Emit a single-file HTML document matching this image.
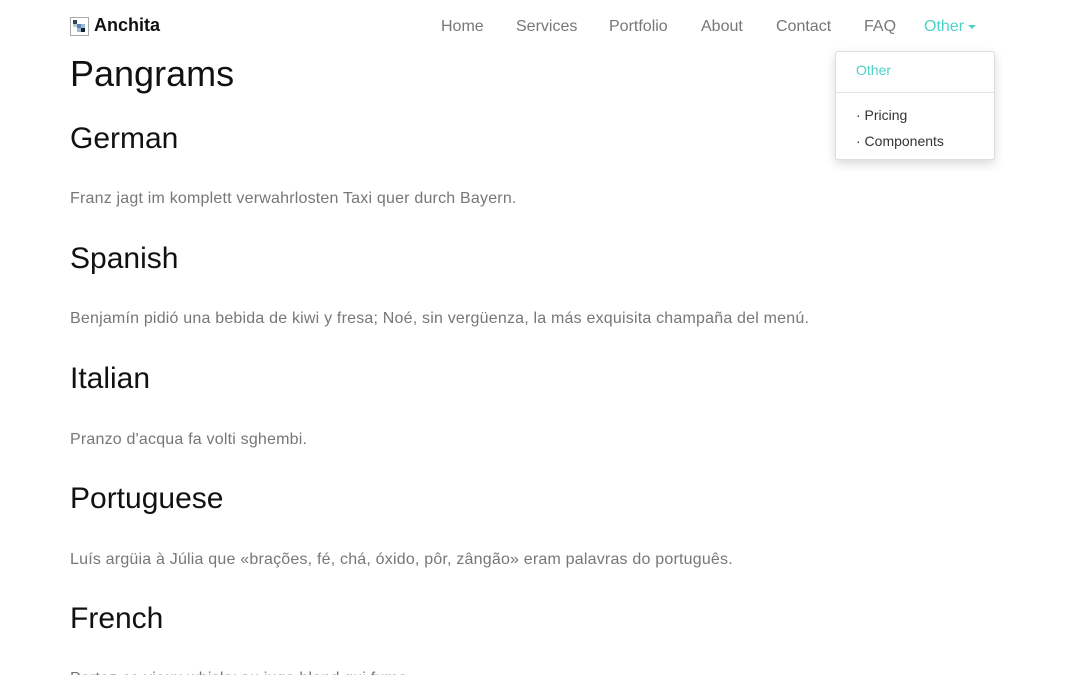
<!DOCTYPE html>
<html><head><meta charset="utf-8"><style>
html,body{margin:0;width:1080px;height:675px;overflow:hidden}
body{background:#fff;font-family:"Liberation Sans",sans-serif;position:relative}
.a{position:absolute;white-space:nowrap}
.nav{font-size:16px;color:#777;top:18px}
h1,h2{margin:0;font-weight:normal;color:#111;position:absolute;left:70px}
h1{font-size:36px;top:53px}
h2{font-size:30px}
p{margin:0;position:absolute;left:70px;font-size:16px;color:#777;white-space:nowrap;letter-spacing:0.2px}
.dd{position:absolute;left:835px;top:51px;width:158px;height:107px;border:1px solid #ddd;border-radius:3px;box-shadow:0 4px 10px rgba(0,0,0,.15);background:#fff}
</style></head><body>
<svg class="a" style="left:70px;top:17px" width="19" height="19" viewBox="0 0 19 19"><rect x=".5" y=".5" width="18" height="18" fill="#fff" stroke="#aaa"/><rect x="3" y="3" width="4" height="4" fill="#345"/><rect x="7" y="7" width="4" height="4" fill="#5a7fb0"/><rect x="11" y="11" width="4" height="4" fill="#123"/><rect x="11" y="7" width="4" height="4" fill="#9bc"/><rect x="7" y="11" width="4" height="4" fill="#9bc"/><rect x="3" y="7" width="4" height="3" fill="#bcd"/></svg>
<div class="a" style="left:94px;top:15px;font-size:18px;font-weight:bold;color:#111">Anchita</div>
<div class="a nav" style="left:441px">Home</div>
<div class="a nav" style="left:516px">Services</div>
<div class="a nav" style="left:609px">Portfolio</div>
<div class="a nav" style="left:701px">About</div>
<div class="a nav" style="left:776px">Contact</div>
<div class="a nav" style="left:864px">FAQ</div>
<div class="a nav" style="left:924px;color:#4fd1c5">Other <span style="display:inline-block;width:0;height:0;border-left:4px solid transparent;border-right:4px solid transparent;border-top:4px solid #4fd1c5;vertical-align:middle"></span></div>
<div class="dd">
<div class="a" style="left:20px;top:10px;font-size:14px;color:#4fd1c5">Other</div>
<div class="a" style="left:0;top:40px;width:158px;border-top:1px solid #e5e5e5"></div>
<div class="a" style="left:20px;top:55px;font-size:14px;color:#333">· Pricing</div>
<div class="a" style="left:20px;top:81px;font-size:14px;color:#333">· Components</div>
</div>
<h1>Pangrams</h1>
<h2 style="top:122px">German</h2>
<p style="top:190px">Franz jagt im komplett verwahrlosten Taxi quer durch Bayern.</p>
<h2 style="top:242px">Spanish</h2>
<p style="top:310px">Benjamín pidió una bebida de kiwi y fresa; Noé, sin vergüenza, la más exquisita champaña del menú.</p>
<h2 style="top:362px">Italian</h2>
<p style="top:431px">Pranzo d'acqua fa volti sghembi.</p>
<h2 style="top:482px">Portuguese</h2>
<p style="top:551px">Luís argüia à Júlia que «brações, fé, chá, óxido, pôr, zângão» eram palavras do português.</p>
<h2 style="top:602px">French</h2>
<p style="top:670px">Portez ce vieux whisky au juge blond qui fume.</p>
</body></html>
